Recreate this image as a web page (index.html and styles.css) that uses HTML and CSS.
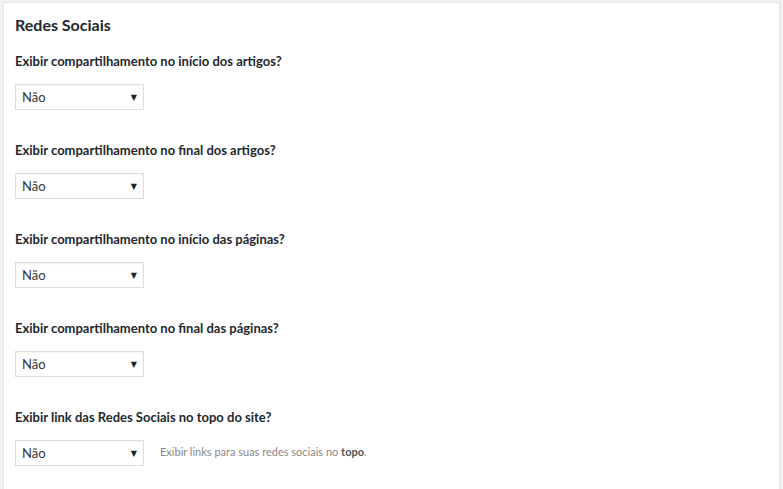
FILE: index.html
```html
<!DOCTYPE html>
<html lang="pt-BR">
<head>
  <meta charset="UTF-8" />
  <meta name="viewport" content="width=device-width, initial-scale=1.0" />
  <title>Redes Sociais</title>
  <link rel="stylesheet" href="styles.css">
</head>
<body>

<main class="panel">
  <h2 class="panel-title">Redes Sociais</h2>

  <div class="field">
    <label class="field-label">Exibir compartilhamento no início dos artigos?</label>
    <div class="field-row">
      <div class="select"><span>Não</span><span class="arrow">▼</span></div>
    </div>
  </div>

  <div class="field">
    <label class="field-label">Exibir compartilhamento no final dos artigos?</label>
    <div class="field-row">
      <div class="select"><span>Não</span><span class="arrow">▼</span></div>
    </div>
  </div>

  <div class="field">
    <label class="field-label">Exibir compartilhamento no início das páginas?</label>
    <div class="field-row">
      <div class="select"><span>Não</span><span class="arrow">▼</span></div>
    </div>
  </div>

  <div class="field">
    <label class="field-label">Exibir compartilhamento no final das páginas?</label>
    <div class="field-row">
      <div class="select"><span>Não</span><span class="arrow">▼</span></div>
    </div>
  </div>

  <div class="field">
    <label class="field-label">Exibir link das Redes Sociais no topo do site?</label>
    <div class="field-row">
      <div class="select"><span>Não</span><span class="arrow">▼</span></div>
      <p class="field-desc">Exibir links para suas redes sociais no <b>topo</b>.</p>
    </div>
  </div>
</main>

</body>
</html>
```

FILE: styles.css
```css
body {
  margin: 0;
  background-color: #f1f1f1;
  font-family: Lato, "Liberation Sans", sans-serif;
  color: #23282d;
}
.panel {
  margin: 2px 3px 0 3px;
  min-height: 487px;
  box-sizing: border-box;
  background-color: #fff;
  border: 1px solid #e5e5e5;
  border-bottom: none;
  padding: 12px 11px 0 11px;
}
.panel-title {
  margin: 0 0 18px 0;
  font-size: 16px;
  font-weight: 700;
  line-height: 20px;
  color: #23282d;
}
.field {margin-bottom: 32px;}
.field-label {
  display: block;
  font-size: 13px;
  font-weight: 700;
  line-height: 16px;
  color: #23282d;
  margin-bottom: 15px;
}
.field-row {
  display: flex;
  align-items: center;
  gap: 16px;
}
.select {
  width: 129px;
  height: 26px;
  box-sizing: border-box;
  border: 1px solid #ddd;
  box-shadow: inset 0 1px 2px rgba(0,0,0,0.05);
  display: flex;
  align-items: center;
  justify-content: space-between;
  padding: 0 6px 0 6px;
  font-size: 13px;
  color: #32373c;
}
.arrow {
  font-size: 8px;
  color: #222;
  font-family: "DejaVu Sans", sans-serif;
}
.field-desc {
  margin: 0 0 4px 0;
  font-size: 11px;
  color: #888;
}
.field-desc b {color: #555;}
```
